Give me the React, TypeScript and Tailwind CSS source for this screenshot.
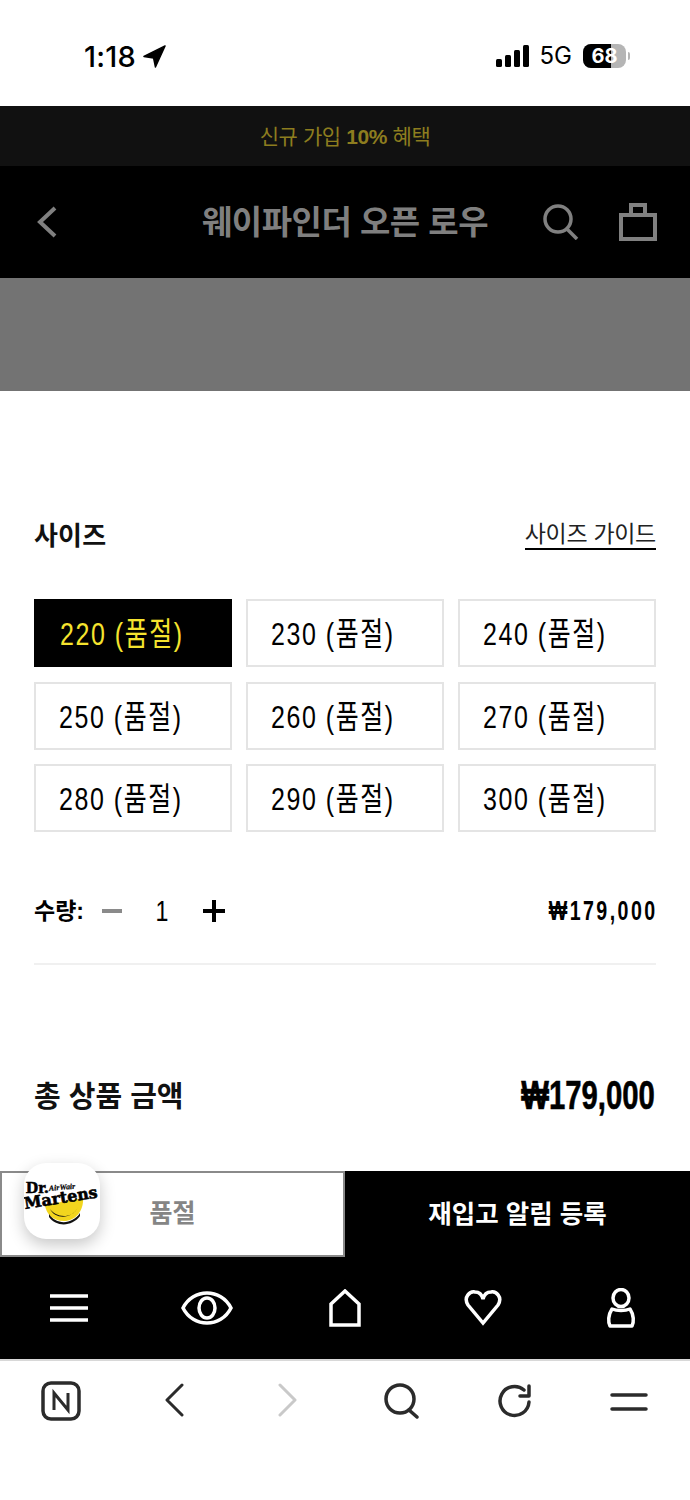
const kr = "font-['Liberation_Sans','Noto_Sans_CJK_KR',sans-serif]";

const sizes = ["220", "230", "240", "250", "260", "270", "280", "290", "300"];

function StatusBar() {
  return (
    <div className="flex h-[106px] items-center justify-between bg-white pl-[84px] pr-[60px] pt-[6px]">
      <div className="flex items-center gap-[7px]">
        <span className="font-['Inter',sans-serif] text-[29px] font-medium leading-none tracking-[0.2px] text-black">1:18</span>
        <svg width="23" height="23" viewBox="0 0 24 24" className="mt-[1px]">
          <path d="M23 1 L1 12 L11 13.5 L13 23 Z" fill="#000" stroke="#000" strokeWidth="1.5" strokeLinejoin="round" />
        </svg>
      </div>
      <div className="flex items-center">
        <svg width="34" height="22" viewBox="0 0 34 22">
          <rect x="0" y="14" width="6" height="8" rx="1.5" fill="#000" />
          <rect x="9" y="10" width="6" height="12" rx="1.5" fill="#000" />
          <rect x="18" y="5" width="6" height="17" rx="1.5" fill="#000" />
          <rect x="27" y="0" width="6" height="22" rx="1.5" fill="#000" />
        </svg>
        <span className="ml-[10px] font-['Inter',sans-serif] text-[24px] font-normal leading-none text-black">5G</span>
        <div className="relative ml-[11px] h-[24px] w-[43px] overflow-hidden rounded-[8px] bg-[#b5b5b5]">
          <div className="h-full w-[28px] bg-black" />
          <span className="absolute inset-0 flex items-center justify-center font-['Inter',sans-serif] text-[20px] font-bold leading-none text-white">68</span>
        </div>
        <div className="ml-[2px] h-[8px] w-[2px] rounded-r-full bg-[#b5b5b5]" />
      </div>
    </div>
  );
}

function TopHeader() {
  return (
    <>
      <div className={`flex h-[60px] items-center justify-center bg-[#111111] pt-[2px] ${kr} text-[21px] tracking-[-0.4px] text-[#8d7d1f]`}>
        신규 가입&nbsp;<b className="font-bold">10%</b>&nbsp;혜택
      </div>
      <div className="relative flex h-[112px] items-center justify-between bg-black pl-[37px] pr-[33px]">
        <svg width="20" height="32" viewBox="0 0 20 32" fill="none" stroke="#808080" strokeWidth="4">
          <path d="M18 2 L3 16 L18 30" />
        </svg>
        <div className={`${kr} absolute left-0 right-0 top-[37px] text-center text-[33px] font-bold leading-[40px] tracking-[-0.5px] text-[#7f7f7f]`}>
          웨이파인더 오픈 로우
        </div>
        <div className="flex items-center gap-[40px]">
          <svg width="36" height="36" viewBox="0 0 36 36" fill="none" stroke="#808080" strokeWidth="3.5">
            <circle cx="15" cy="15" r="13" />
            <path d="M24 25 L34 35" />
          </svg>
          <svg width="38" height="38" viewBox="0 0 38 38" fill="none" stroke="#808080" strokeWidth="4">
            <path d="M2 12 H36 V36 H2 Z" />
            <path d="M12 12 V2 H26 V12" />
          </svg>
        </div>
      </div>
      <div className="h-[113px] bg-[#737373]" />
    </>
  );
}

function SizePicker() {
  return (
    <div className="px-[34px]">
      <div className="flex h-[40px] items-center justify-between">
        <span className={`${kr} pt-[3px] text-[26px] font-bold tracking-[0.2px] text-[#111111]`}>사이즈</span>
        <span className={`${kr} border-b-2 border-black text-[23px] leading-[27px] tracking-[-0.3px] text-[#222222]`}>사이즈 가이드</span>
      </div>
      <div className="mt-[44px] grid grid-cols-3 gap-x-[14px] gap-y-[14.5px]">
        {sizes.map((s, i) => (
          <div
            key={s}
            className={`flex h-[68px] items-center pt-[2px] ${
              i === 0 ? "bg-black pl-[26px] text-[#f5e32e]" : "border-2 border-[#e4e4e4] bg-white pl-[23px] text-black"
            }`}
          >
            <span className={`origin-left scale-x-[0.78] whitespace-nowrap ${kr} text-[32px] tracking-[2px]`}>{s} (품절)</span>
          </div>
        ))}
      </div>
    </div>
  );
}

function Quantity() {
  return (
    <div className="mt-[51px] px-[34px]">
      <div className="flex h-[56px] items-center justify-between">
        <div className="flex items-center">
          <span className={`${kr} w-[68px] text-[23px] font-bold text-black`}>수량:</span>
          <div className="h-[4px] w-[20px] bg-[#8a8a8a]" />
          <span className={`w-[82px] pr-[1px] pt-[2px] text-center ${kr}`}>
            <span className="inline-block scale-x-[0.8] text-[29px] text-black">1</span>
          </span>
          <svg width="22" height="22" viewBox="0 0 22 22" stroke="#000" strokeWidth="4" className="ml-[-1px]">
            <path d="M0 11 H22 M11 0 V22" />
          </svg>
        </div>
        <span className={`origin-right scale-x-[0.7] whitespace-nowrap ${kr} mr-[-2px] text-[28px] font-bold tracking-[3.5px] text-black`}>₩179,000</span>
      </div>
      <div className="mt-[24px] h-[2px] bg-[#f0f0f0]" />
    </div>
  );
}

function Total() {
  return (
    <div className="mt-[108px] flex h-[46px] items-center justify-between px-[34px]">
      <span className={`${kr} pt-[3px] text-[29px] font-bold text-[#111111]`}>총 상품 금액</span>
      <span className={`origin-right scale-x-[0.715] whitespace-nowrap ${kr} mr-[1px] text-[41px] font-bold text-black [-webkit-text-stroke:0.6px_black]`}>₩179,000</span>
    </div>
  );
}

function Logo() {
  // floating app badge with the brand mark
  return (
    <div className="absolute left-[24px] top-[-8px] flex h-[76px] w-[76px] items-center justify-center rounded-[22px] bg-white shadow-[0_6px_16px_rgba(0,0,0,0.22)]">
      <svg width="76" height="76" viewBox="0 0 76 76">
        <path d="M21 42 L59 35 C60 48 51 58 40 58 C29 58 22 51 21 42 Z" fill="#f2d61e" />
        <path d="M26 46 C31 57 49 56 54 44 C51 51 45 53 40 53 C34 53 29 50 26 46 Z" fill="#111" />
        <path d="M25 51 C32 62 48 62 56 50 L56 53 C48 64 32 64 25 54 Z" fill="#111" />
        <text x="2" y="30" fontFamily="Liberation Serif" fontWeight="700" fontSize="17" fill="#000" stroke="#000" strokeWidth="0.6">Dr.</text>
        <text x="25" y="28" fontFamily="Liberation Serif" fontWeight="700" fontStyle="italic" fontSize="8" fill="#000" stroke="#000" strokeWidth="0.2" transform="rotate(-5 25 28)">AirWair</text>
        <text x="1" y="46" fontFamily="DejaVu Serif" fontWeight="700" fontSize="16" fill="#000" stroke="#000" strokeWidth="0.6" textLength="74" lengthAdjust="spacingAndGlyphs" transform="rotate(-9 1 46)">Martens</text>
      </svg>
    </div>
  );
}

function BuyBar() {
  return (
    <div className="relative mt-[52px] grid h-[86px] grid-cols-2">
      <div className={`flex items-center justify-center border-2 border-[#8a8a8a] bg-white ${kr} text-[25px] font-bold text-[#858585]`}>품절</div>
      <div className={`flex items-center justify-center bg-black ${kr} text-[25.5px] font-bold text-white`}>재입고 알림 등록</div>
      <Logo />
    </div>
  );
}

function TabBar() {
  return (
    <div className="grid h-[102px] grid-cols-5 items-center justify-items-center bg-black">
      <svg width="38" height="28" viewBox="0 0 38 28" stroke="#fff" strokeWidth="3.5">
        <path d="M0 2 H38 M0 14 H38 M0 26 H38" />
      </svg>
      <svg width="52" height="34" viewBox="0 0 52 34" fill="none" stroke="#fff" strokeWidth="3.5">
        <path d="M2 17 C12 -3 40 -3 50 17 C40 37 12 37 2 17 Z" />
        <ellipse cx="26" cy="17" rx="8" ry="10" />
      </svg>
      <svg width="32" height="38" viewBox="0 0 32 38" fill="none" stroke="#fff" strokeWidth="3.5">
        <path d="M2 36 V15 L16 2 L30 15 V36 Z" />
      </svg>
      <svg width="38" height="36" viewBox="0 0 38 36" fill="none" stroke="#fff" strokeWidth="3.5">
        <path d="M19 33 L4 15 C-1 7 6 1 11 2 C15 2 18 5 19 9 C20 5 23 2 27 2 C32 1 39 7 34 15 Z" />
      </svg>
      <svg width="30" height="40" viewBox="0 0 30 40" fill="none" stroke="#fff" strokeWidth="3.5">
        <ellipse cx="15" cy="10" rx="8" ry="8.5" />
        <path d="M6 21 C11 23 19 23 24 21 C28 27 28 34 26 38 H4 C2 34 2 27 6 21 Z" strokeLinejoin="round" />
      </svg>
    </div>
  );
}

function BrowserBar() {
  return (
    <div className="grid h-[141px] grid-cols-6 items-start justify-items-center border-t-2 border-[#d8d8d8] bg-white px-[4px] pt-[20px]">
      <svg width="40" height="40" viewBox="0 0 40 40" fill="none" stroke="#2b2b2b">
        <rect x="2" y="2" width="36" height="36" rx="8" strokeWidth="3.5" />
        <path d="M13 29 V12 L27 29 V12" strokeWidth="3" />
      </svg>
      <svg width="20" height="34" viewBox="0 0 20 34" fill="none" stroke="#2b2b2b" strokeWidth="3" strokeLinecap="round" strokeLinejoin="round" className="mt-[2px]">
        <path d="M18 2 L3 17 L18 32" />
      </svg>
      <svg width="20" height="34" viewBox="0 0 20 34" fill="none" stroke="#c9c9c9" strokeWidth="3" strokeLinecap="round" strokeLinejoin="round" className="mt-[2px]">
        <path d="M2 2 L17 17 L2 32" />
      </svg>
      <svg width="36" height="36" viewBox="0 0 36 36" fill="none" stroke="#2b2b2b" strokeWidth="3.5" strokeLinecap="round" className="mt-[2px]">
        <circle cx="16" cy="16" r="14" />
        <path d="M25 27 L33 34" />
      </svg>
      <svg width="34" height="36" viewBox="0 0 34 36" fill="none" stroke="#2b2b2b" strokeWidth="3.5" strokeLinecap="round" className="mt-[2px]">
        <path d="M26 7 A14.5 14.5 0 1 0 31 19" />
        <path d="M31 3 V13 H22" strokeLinejoin="round" />
      </svg>
      <svg width="38" height="20" viewBox="0 0 38 20" stroke="#2b2b2b" strokeWidth="3.5" strokeLinecap="round" className="mt-[11px]">
        <path d="M2 3 H36 M2 17 H36" />
      </svg>
    </div>
  );
}

export default function App() {
  return (
    <div className="h-[1500px] w-[690px] overflow-hidden bg-white">
      <StatusBar />
      <TopHeader />
      <div className="pt-[124px]">
        <SizePicker />
        <Quantity />
        <Total />
        <BuyBar />
        <TabBar />
        <BrowserBar />
      </div>
    </div>
  );
}
